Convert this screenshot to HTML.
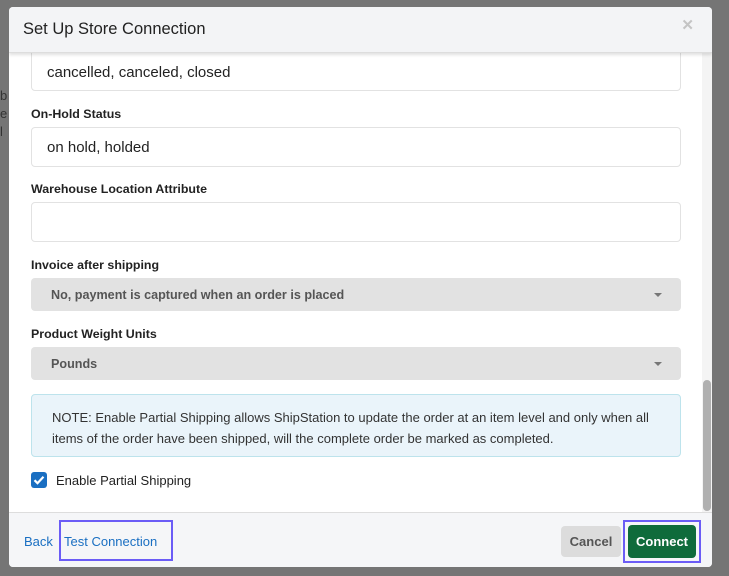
<!DOCTYPE html>
<html><head><style>
*{box-sizing:border-box;margin:0;padding:0}
body{width:729px;height:576px;background:#757575;font-family:"Liberation Sans",Arial,sans-serif;position:relative;overflow:hidden}
.bgtxt{position:absolute;left:0;font-size:13px;color:#333;background:transparent}
.modal{position:absolute;left:9px;top:7px;width:703px;height:560px;background:#fff;border-radius:4px;overflow:hidden}
.hdr{position:absolute;left:0;top:0;width:703px;height:46px;background:#f3f4f6;border-bottom:1px solid #ddd;box-shadow:0 2px 3px rgba(0,0,0,.12);z-index:2}
.hdr h1{position:absolute;left:14px;top:13px;font-size:16.5px;font-weight:normal;color:#222}
.x{position:absolute;right:18px;top:9px;color:#c4c4c4;font-size:15px;font-weight:bold}
.abs{position:absolute}
.inp{position:absolute;left:22px;width:650px;border:1px solid #e2e2e2;border-radius:4px;background:#fff;font-size:15px;color:#222;padding-left:15px}
.lbl{position:absolute;left:22px;font-size:12.4px;font-weight:bold;color:#222}
.sel{position:absolute;left:22px;width:650px;background:#e2e2e2;border-radius:4px;font-size:12.6px;font-weight:bold;color:#555;padding-left:20px}
.sel:after{content:"";position:absolute;right:19px;top:15px;border-left:4px solid transparent;border-right:4px solid transparent;border-top:4px solid #777}
.note{position:absolute;left:22px;top:387px;width:650px;height:63px;background:#eaf4fa;border:1px solid #bde3ec;border-radius:4px;font-size:13px;color:#333;padding:12px 0 0 20px;line-height:21px}
.sb{position:absolute;left:693px;top:46px;width:10px;height:459px;background:#f4f4f4}
.thumb{position:absolute;left:694px;top:373px;width:8px;height:131px;background:#b0b0b0;border-radius:4px}
.foot{position:absolute;left:0;top:505px;width:703px;height:55px;background:#f5f6f8;border-top:1px solid #ddd}
</style></head><body>
<div class="bgtxt" style="top:88px">b</div>
<div class="bgtxt" style="top:106px">e</div>
<div class="bgtxt" style="top:124px">l</div>
<div class="modal">
<div class="hdr"><h1>Set Up Store Connection</h1><div class="x">✕</div></div>
<div class="inp" style="top:40px;height:44px;padding-top:16px">cancelled, canceled, closed</div>
<div class="lbl" style="top:100px">On-Hold Status</div>
<div class="inp" style="top:120px;height:40px;padding-top:11px">on hold, holded</div>
<div class="lbl" style="top:175px">Warehouse Location Attribute</div>
<div class="inp" style="top:195px;height:40px"></div>
<div class="lbl" style="top:251px">Invoice after shipping</div>
<div class="sel" style="top:271px;height:33px;padding-top:10px">No, payment is captured when an order is placed</div>
<div class="lbl" style="top:320px">Product Weight Units</div>
<div class="sel" style="top:340px;height:33px;padding-top:10px">Pounds</div>
<div class="note">NOTE: Enable Partial Shipping allows ShipStation to update the order at an item level and only when all<br>items of the order have been shipped, will the complete order be marked as completed.</div>
<div class="abs" style="left:22px;top:465px;width:16px;height:16px;background:#1a6fc2;border-radius:3px"><svg width="16" height="16" viewBox="0 0 16 16"><path d="M3.5 8.2l3 3 6-6.5" stroke="#fff" stroke-width="2.2" fill="none"/></svg></div>
<div class="abs" style="left:47px;top:466px;font-size:13px;color:#222">Enable Partial Shipping</div>
<div class="sb"></div><div class="thumb"></div>
<div class="foot">
<div class="abs" style="left:15px;top:21px;font-size:13px;color:#1a6fc2">Back</div>
<div class="abs" style="left:50px;top:7px;width:114px;height:41px;border:2px solid #6b5cf6"></div>
<div class="abs" style="left:55px;top:21px;font-size:13px;color:#1a6fc2">Test Connection</div>
<div class="abs" style="left:552px;top:13px;width:60px;height:31px;background:#dcdcdc;border-radius:4px;font-size:13px;font-weight:bold;color:#555;text-align:center;line-height:31px">Cancel</div>
<div class="abs" style="left:614px;top:7px;width:78px;height:43px;border:2px solid #6b5cf6"></div>
<div class="abs" style="left:619px;top:12px;width:68px;height:33px;background:#0f6b3b;border-radius:4px;font-size:13px;font-weight:bold;color:#fff;text-align:center;line-height:33px">Connect</div>
</div>
</div>
</body></html>
